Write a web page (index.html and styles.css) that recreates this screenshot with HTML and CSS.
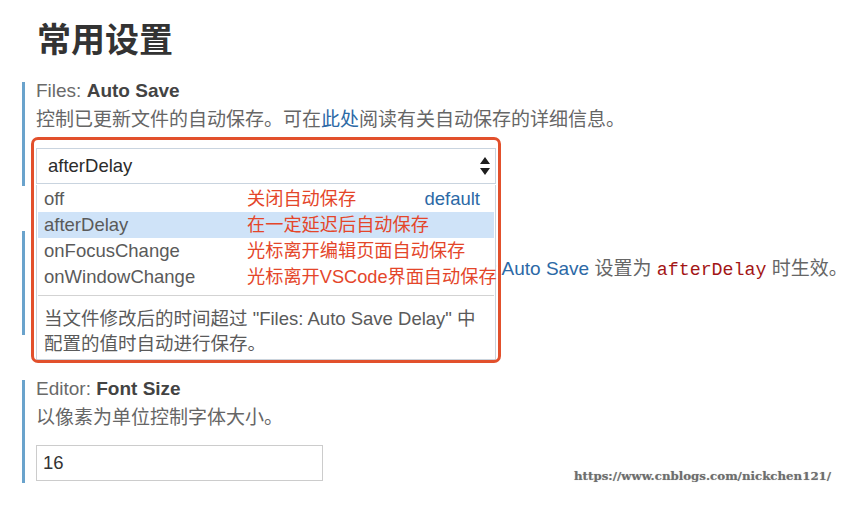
FILE: index.html
```html
<!DOCTYPE html>
<html lang="zh-CN">
<head>
    <meta charset="UTF-8">
    <title>常用设置</title>
    <link rel="stylesheet" href="styles.css">
</head>
<body>
    <div id="page">
        <h1 class="page-title">常用设置</h1>

        <div class="setting">
            <div class="setting-title"><span class="cat">Files: </span><b>Auto Save</b></div>
            <div class="setting-desc">控制已更新文件的自动保存。可在<a class="link">此处</a>阅读有关自动保存的详细信息。</div>
            <div class="select">
                <span>afterDelay</span>
                <svg class="arrows" width="10" height="20" viewBox="0 0 10 20"><path d="M5 1 L10 8 H0 Z M0 12 H10 L5 19 Z" fill="#1e1e1e"/></svg>
            </div>
            <div class="dropdown">
                <ul class="options">
                    <li><span class="opt">off</span><span class="note">关闭自动保存</span><span class="tag">default</span></li>
                    <li class="active"><span class="opt">afterDelay</span><span class="note">在一定延迟后自动保存</span></li>
                    <li><span class="opt">onFocusChange</span><span class="note">光标离开编辑页面自动保存</span></li>
                    <li><span class="opt">onWindowChange</span><span class="note">光标离开VSCode界面自动保存</span></li>
                </ul>
                <div class="dropdown-desc">当文件修改后的时间超过 "Files: Auto Save Delay" 中<br>配置的值时自动进行保存。</div>
            </div>
            <div class="mark"></div>
        </div>

        <div class="setting">
            <div class="setting-title"><span class="cat">Files: </span><b>Auto Save Delay</b></div>
            <div class="setting-desc">控制在多少 ms后自动保存已更改过的文件。只在 <a class="link">Files: Auto Save</a> 设置为 <code>afterDelay</code> 时生效。</div>
            <div class="input">1000</div>
        </div>

        <div class="setting">
            <div class="setting-title"><span class="cat">Editor: </span><b>Font Size</b></div>
            <div class="setting-desc">以像素为单位控制字体大小。</div>
            <div class="input">16</div>
        </div>
    </div>
    <div class="watermark">https://www.cnblogs.com/nickchen121/</div>
</body>
</html>
```

FILE: styles.css
```css
*{
    margin: 0;
    padding: 0;
    box-sizing: border-box;
}
ul,li{
    list-style: none;
}
body{
    background: #ffffff;
    font-family: "Liberation Sans", "Noto Sans CJK SC", sans-serif;
    font-size: 19px;
    color: #666666;
}
#page{
    padding: 20px 0 0 22px;
}
.page-title{
    font-size: 34px;
    line-height: 40px;
    font-weight: bold;
    color: #333333;
    margin: 0 0 22px 15px;
}
.setting{
    position: relative;
    border-left: 3px solid #6aa3cc;
    padding: 0 0 2px 11px;
    margin-bottom: 45px;
}
.setting-title{
    line-height: 18px;
    color: #6a6a6a;
    white-space: nowrap;
}
.setting-title b{
    color: #434343;
}
.setting-desc{
    margin-top: 8px;
    line-height: 24px;
    color: #666666;
    white-space: nowrap;
}
.link{
    color: #2c69a6;
}
code{
    font-family: "Liberation Mono", monospace;
    font-size: 18.3px;
    color: #a31515;
}
.select{
    margin-top: 16px;
    width: 460px;
    height: 36px;
    border: 1px solid #c9d4df;
    padding: 0 5px 0 11px;
    display: flex;
    align-items: center;
    justify-content: space-between;
    font-size: 18.5px;
    color: #2b2b2b;
}
.input{
    margin-top: 15px;
    width: 287px;
    height: 36px;
    border: 1px solid #cccccc;
    padding: 0 6px;
    line-height: 34px;
    font-size: 18.5px;
    color: #333333;
}
.dropdown{
    position: absolute;
    left: 11px;
    top: 103px;
    width: 460px;
    background: #ffffff;
    border: 1px solid #cbd4dd;
    border-top: none;
    padding: 1px 1px 3px;
    z-index: 2;
}
.options li{
    display: flex;
    height: 26px;
    line-height: 26px;
    padding: 0 14px 0 6px;
    white-space: nowrap;
    font-size: 18.5px;
    color: #5a5a5a;
}
.options li.active{
    background: #cfe3f8;
}
.opt{
    width: 203px;
    flex-shrink: 0;
}
.note{
    font-size: 18.2px;
    color: #e4462a;
}
.tag{
    margin-left: auto;
    color: #2c69a6;
}
.dropdown-desc{
    margin-top: 5px;
    border-top: 1px solid #d3d3d3;
    padding: 10px 6px 0;
    line-height: 25px;
    white-space: nowrap;
    font-size: 18.5px;
    color: #5a5a5a;
}
.mark{
    position: absolute;
    left: 6px;
    top: 55px;
    width: 470px;
    height: 226px;
    border: 3px solid #e2502c;
    border-radius: 7px;
    z-index: 3;
}
.watermark{
    position: absolute;
    left: 574px;
    top: 469px;
    font-family: "DejaVu Serif", serif;
    font-size: 11.8px;
    font-weight: bold;
    color: #6e6e6e;
    text-shadow: 0 0 1px #bbbbbb;
}
```
